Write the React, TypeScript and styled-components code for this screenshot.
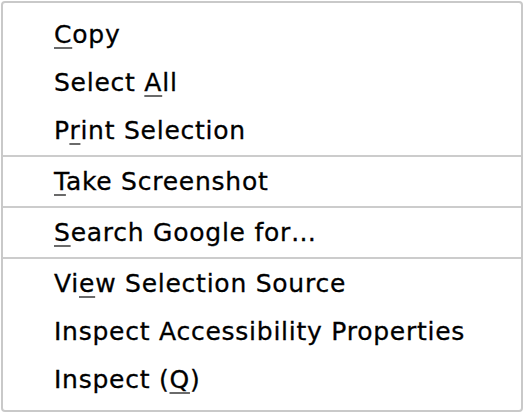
import React from "react";
import styled, { createGlobalStyle } from "styled-components";

const Global = createGlobalStyle`
  html, body {
    margin: 0;
    padding: 0;
    background: #ffffff;
  }
  body {
    font-family: "DejaVu Sans", "Liberation Sans", sans-serif;
  }
`;

const Menu = styled.div`
  box-sizing: border-box;
  margin: 1px;
  width: 522px;
  height: 411px;
  border: 2px solid #c9c9c9;
  border-radius: 4px;
  background: #ffffff;
  padding: 8px 0 6px;
  display: flex;
  flex-direction: column;
`;

const Item = styled.div`
  box-sizing: border-box;
  height: 48px;
  padding: 0 0 0 51px;
  line-height: 48px;
  font-size: 25px;
  letter-spacing: 0.75px;
  color: #000000;
  -webkit-text-stroke: 0.3px #000000;
  white-space: nowrap;
`;

const AccessKey = styled.span`
  text-decoration: underline;
  text-decoration-color: #6a6a6a;
  text-decoration-thickness: 2px;
  text-underline-offset: 4px;
  text-decoration-skip-ink: none;
`;

const Separator = styled.div`
  height: 2px;
  background: #cccccc;
  margin-bottom: 1px;
  flex: none;
`;

type Entry = { label: string; key?: number } | "sep";

const entries: Entry[] = [
  { label: "Copy", key: 0 },
  { label: "Select All", key: 7 },
  { label: "Print Selection", key: 1 },
  "sep",
  { label: "Take Screenshot", key: 0 },
  "sep",
  { label: "Search Google for…", key: 0 },
  "sep",
  { label: "View Selection Source", key: 2 },
  { label: "Inspect Accessibility Properties" },
  { label: "Inspect (Q)", key: 9 },
];

function Label({ label, k }: { label: string; k?: number }) {
  if (k === undefined) return <>{label}</>;
  return (
    <>
      {label.slice(0, k)}
      <AccessKey>{label[k]}</AccessKey>
      {label.slice(k + 1)}
    </>
  );
}

export default function App() {
  return (
    <>
      <Global />
      <Menu>
        {entries.map((e, i) =>
          e === "sep" ? (
            <Separator key={i} />
          ) : (
            <Item key={i}>
              <Label label={e.label} k={e.key} />
            </Item>
          )
        )}
      </Menu>
    </>
  );
}
